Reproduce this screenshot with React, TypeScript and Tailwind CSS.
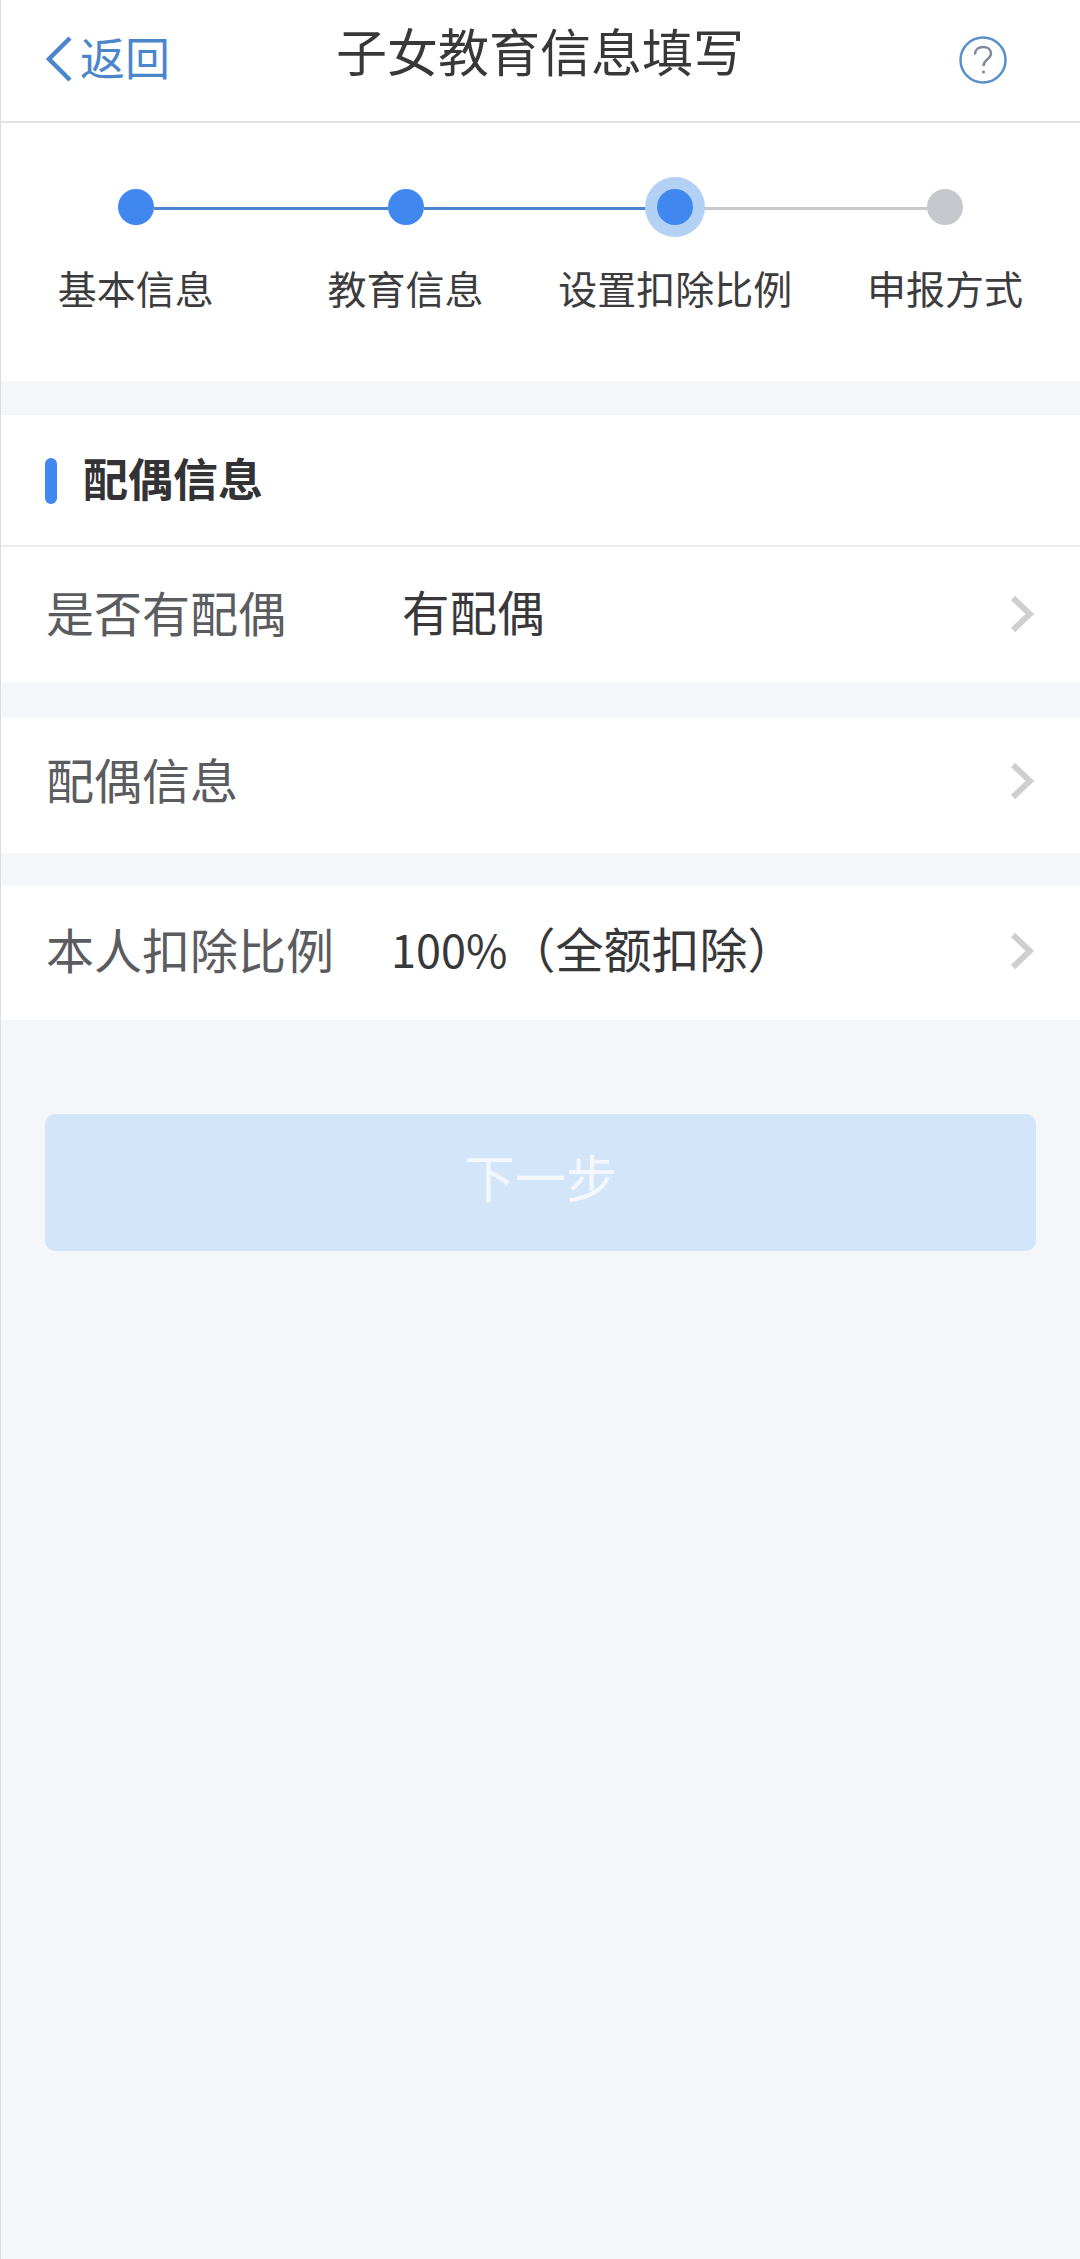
const FONT = "font-['Noto_Sans_CJK_SC','Noto_Sans',sans-serif]";

type Step = { label: string; done: boolean; current?: boolean };

const STEPS: Step[] = [
  { label: '基本信息', done: true },
  { label: '教育信息', done: true },
  { label: '设置扣除比例', done: true, current: true },
  { label: '申报方式', done: false },
];

function Chevron() {
  return (
    <svg width="24" height="38" viewBox="0 0 24 38" fill="none" className="shrink-0 -mt-[1px]">
      <path d="M3 3 L20 19 L3 35" stroke="#cfcfd1" strokeWidth="6" />
    </svg>
  );
}

function Stepper() {
  return (
    <div className="grid grid-cols-4 bg-white h-[258px] pt-[66px]">
      {STEPS.map((s, i) => {
        const next = STEPS[i + 1];
        return (
          <div key={s.label} className="flex flex-col items-center">
            <div className="flex items-center w-full h-[36px]">
              <div
                className={`flex-1 h-[3px] mt-[2px] ${i === 0 ? 'bg-transparent' : s.done ? 'bg-[#4a86d0]' : 'bg-[#c9c9cb]'}`}
              />
              <div
                className={`relative w-[36px] h-[36px] rounded-full ${s.done ? 'bg-[#4087f0]' : 'bg-[#c5c7cd]'} ${s.current ? 'shadow-[0_0_0_12px_#b3d1f5]' : ''}`}
              />
              <div
                className={`flex-1 h-[3px] mt-[2px] ${!next ? 'bg-transparent' : next.done ? 'bg-[#4a86d0]' : 'bg-[#c9c9cb]'}`}
              />
            </div>
            <div className="mt-[34px] text-[39px] leading-[56px] text-[#3c3c3e] whitespace-nowrap">{s.label}</div>
          </div>
        );
      })}
    </div>
  );
}

function Row({
  label,
  children,
  className,
}: {
  label: string;
  children?: React.ReactNode;
  className?: string;
}) {
  return (
    <div className={`flex items-center bg-white pl-[45px] pr-[46px] ${className ?? ''}`}>
      <div className="w-[356px] shrink-0 mb-[7px] text-[48px] text-[#5b5c60] whitespace-nowrap">{label}</div>
      <div className="flex-1 mb-[7px] text-[47.5px] text-[#38383a] whitespace-nowrap">{children}</div>
      <Chevron />
    </div>
  );
}

export default function App() {
  return (
    <div className={`${FONT} min-h-[2259px] bg-[#f5f6fa] border-l border-[#dcdcde] flex flex-col`}>
      <header className="flex items-center justify-between bg-white h-[123px] border-b-2 border-[#e3e3e7] pl-[44px] pr-[73px]">
        <div className="flex items-center w-[200px] -mt-[4px] text-[#4a86cc]">
          <svg width="28" height="46" viewBox="0 0 28 46" fill="none" className="shrink-0">
            <path d="M25 2 L4 23 L25 44" stroke="#4a86cc" strokeWidth="4.5" />
          </svg>
          <span className="ml-[7px] mb-[4px] text-[45px] leading-none">返回</span>
        </div>
        <h1 className="mb-[20px] ml-[28px] text-[51px] leading-none text-[#38383a] whitespace-nowrap">子女教育信息填写</h1>
        <div className="w-[200px] flex justify-end -mt-[2px]">
          <svg width="48" height="48" viewBox="0 0 48 48" fill="none">
            <circle cx="24" cy="24" r="22.5" stroke="#5a8fc8" strokeWidth="2.5" />
            <path
              d="M16 18.5 C16 13.5 19.5 11 24 11 C28.5 11 32 13.5 32 17.5 C32 23 24.5 23.5 24.5 30"
              stroke="#7e8a97"
              strokeWidth="2.5"
            />
            <circle cx="24.5" cy="36" r="1.6" fill="#7e8a97" />
          </svg>
        </div>
      </header>

      <Stepper />

      <section className="mt-[34px] bg-white">
        <div className="flex items-center h-[132px] pl-[44px] border-b-2 border-[#ececee]">
          <span className="w-[12px] h-[46px] mt-[2px] rounded-full bg-[#4087f0]" />
          <h2 className="ml-[26px] mb-[5px] text-[45px] leading-none font-bold text-[#333335]">配偶信息</h2>
        </div>
        <Row label="是否有配偶" className="h-[135px]">
          有配偶
        </Row>
      </section>

      <div className="mt-[36px]">
        <Row label="配偶信息" className="h-[135px] pb-[8px]" />
      </div>

      <div className="mt-[33px]">
        <Row label="本人扣除比例" className="h-[134px] pb-[4px]">
          <span className="-ml-[11px] text-[45px]">100%</span>
          <span className="text-[48px]">（全额扣除）</span>
        </Row>
      </div>

      <div className="px-[44px] mt-[94px]">
        <button
          type="button"
          className="w-full h-[137px] rounded-[10px] pb-[12px] bg-[#d3e5f9] text-[51px] text-[#f4f8fd]"
        >
          下一步
        </button>
      </div>
    </div>
  );
}
